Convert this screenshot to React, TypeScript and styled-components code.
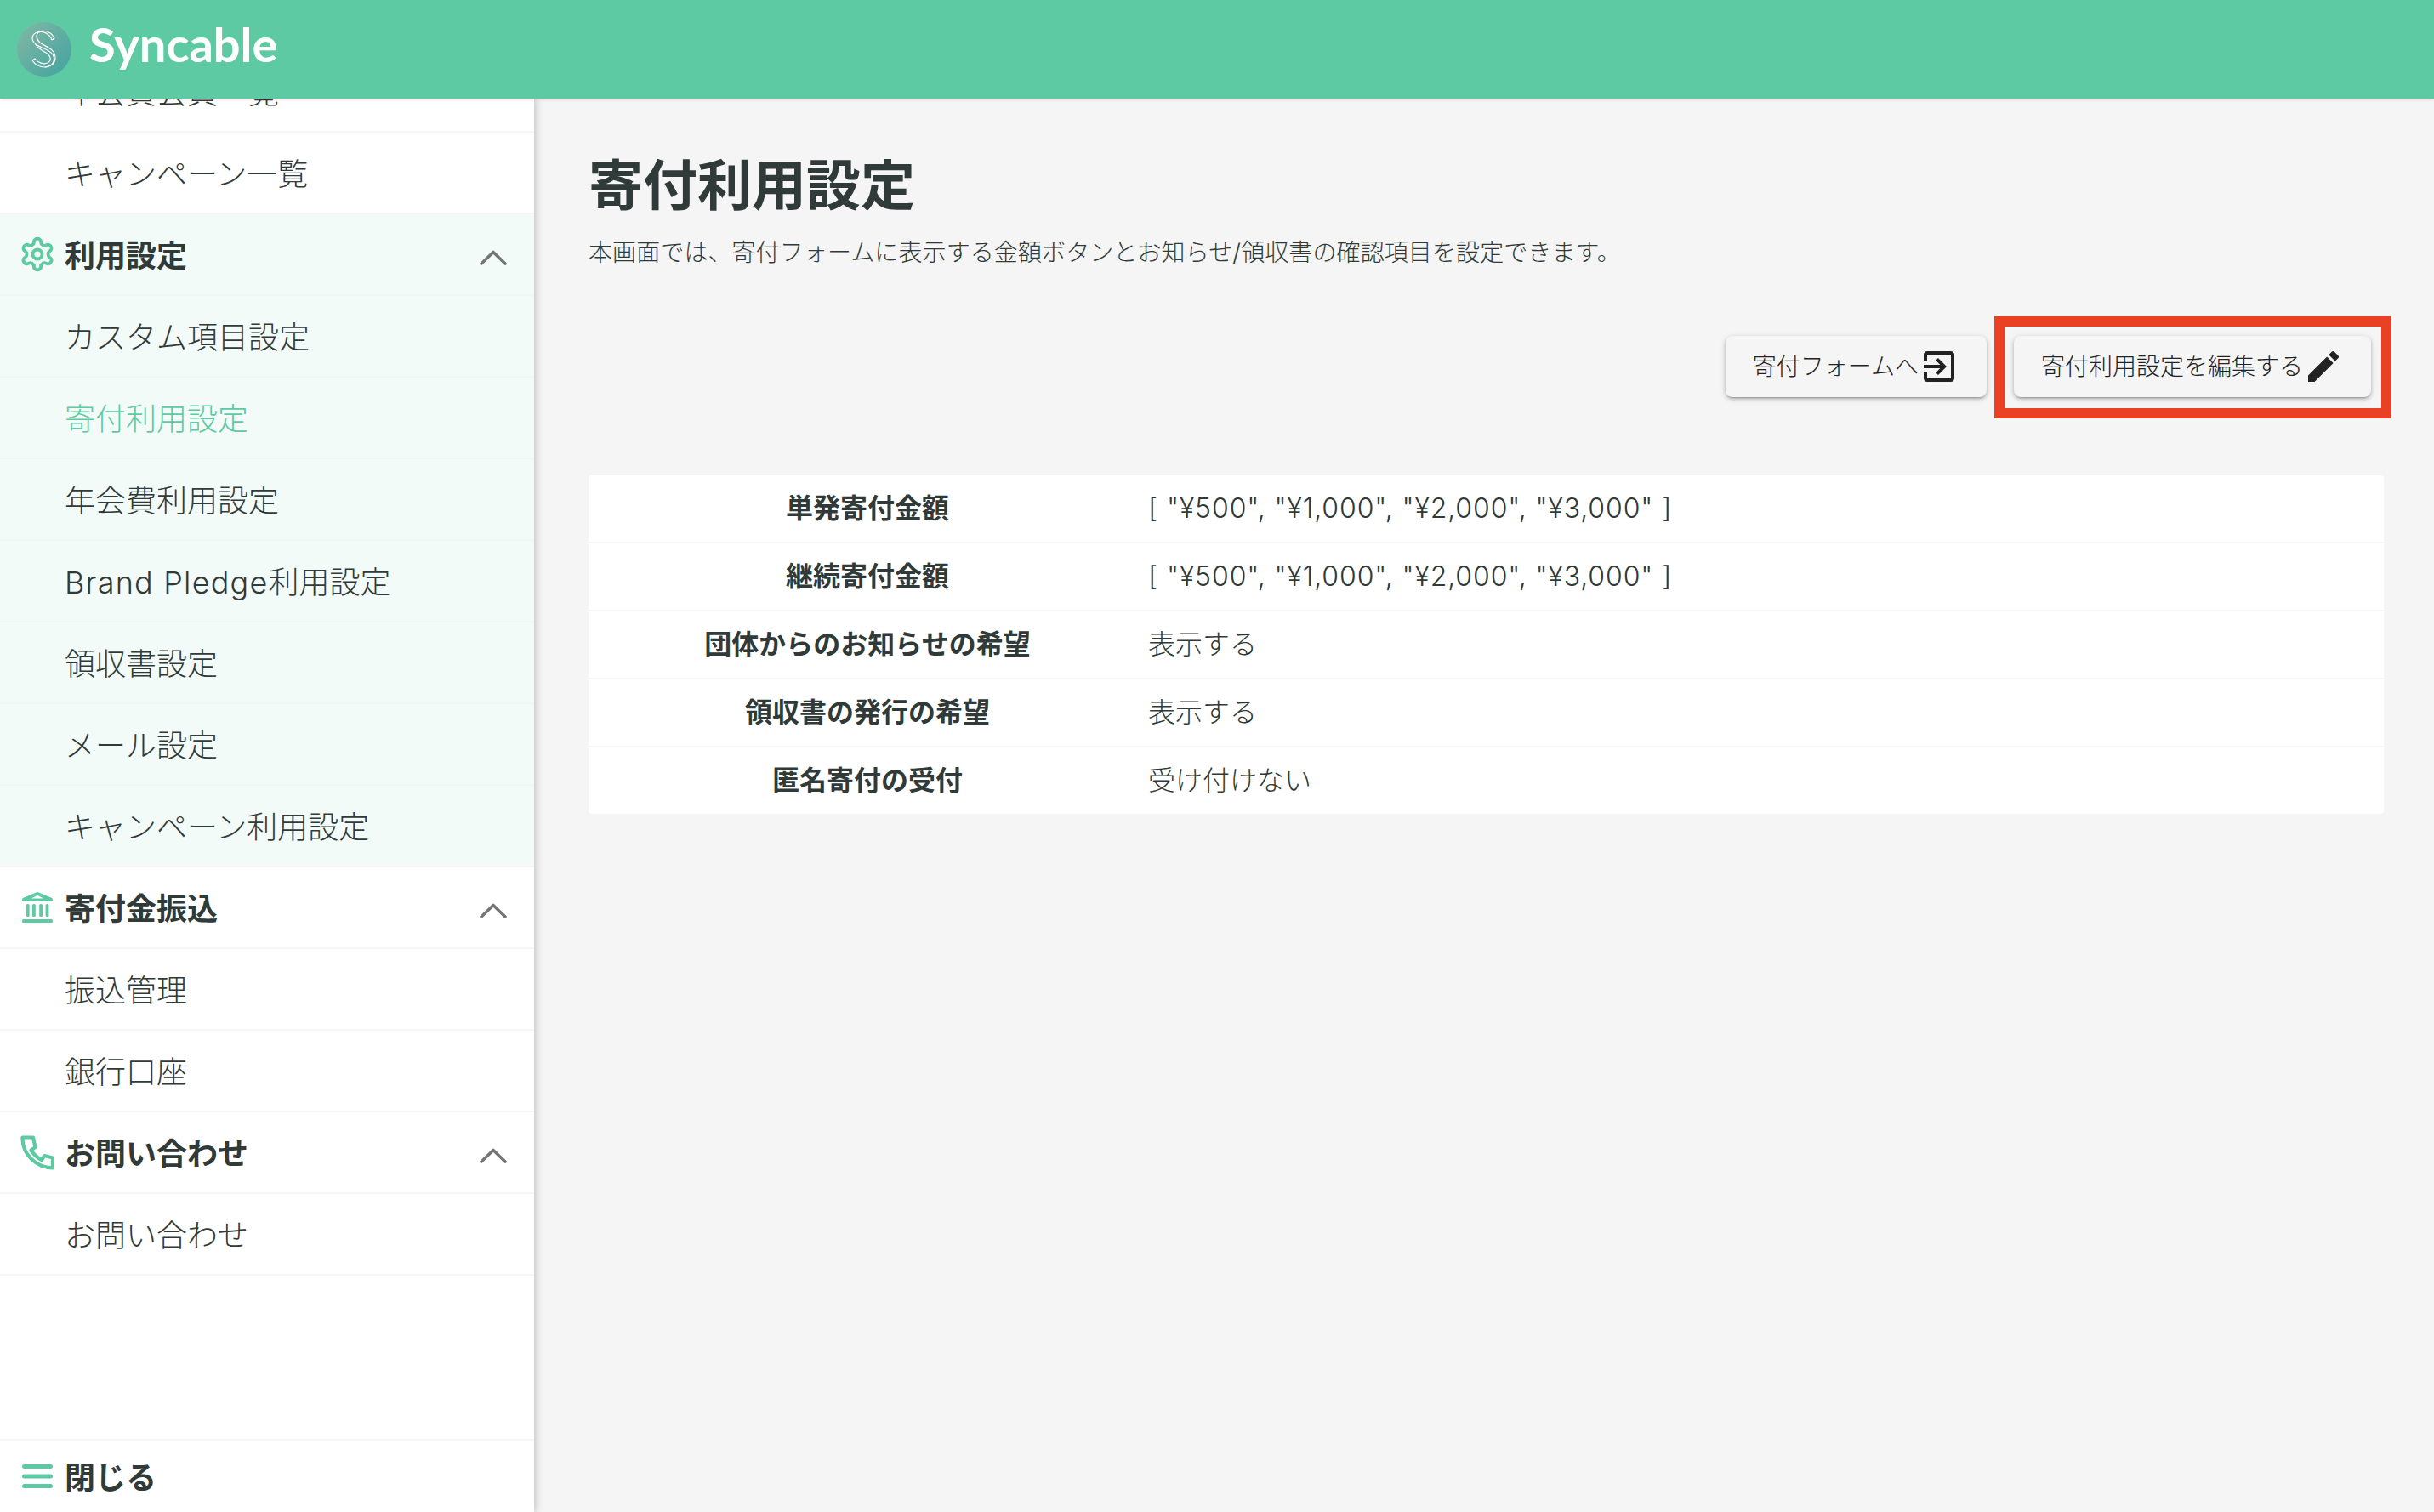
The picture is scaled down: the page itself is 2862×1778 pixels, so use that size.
import React from "react";
import styled, { createGlobalStyle } from "styled-components";

const GREEN = "#5ecaa3";
const INK = "#303a38";

const GlobalStyle = createGlobalStyle`
  html, body {
    margin: 0;
    padding: 0;
    height: 100%;
    overflow: hidden;
    background: #f5f5f5;
  }
  * {
    box-sizing: border-box;
  }
  body {
    font-family: Inter, "Noto Sans CJK JP", sans-serif;
    color: ${INK};
  }
`;

const Page = styled.div`
  width: 2862px;
  height: 1778px;
  display: flex;
  flex-direction: column;
  overflow: hidden;
`;

const Header = styled.header`
  height: 116px;
  flex: none;
  display: flex;
  align-items: center;
  gap: 21px;
  padding-left: 20px;
  background: ${GREEN};
  box-shadow: 0 1px 4px rgba(0, 0, 0, 0.12);
  position: relative;
  z-index: 2;
`;

const Brand = styled.span`
  font-family: Lato, sans-serif;
  font-size: 56px;
  font-weight: 700;
  line-height: 64px;
  color: #fff;
  margin-bottom: 12px;
`;

const Body = styled.div`
  flex: 1;
  min-height: 0;
  display: flex;
`;

const Sidebar = styled.aside`
  width: 628px;
  flex: none;
  display: flex;
  flex-direction: column;
  background: #fff;
  box-shadow: 3px 0 8px rgba(0, 0, 0, 0.18);
  position: relative;
  z-index: 1;
`;

const Nav = styled.nav`
  flex: 1;
  min-height: 0;
  overflow: hidden;
  display: flex;
  flex-direction: column;
`;

/* the list is scrolled a little in the screenshot, the first row is cut by the header */
const NavScroll = styled.div`
  margin-top: -56px;
`;

const Row = styled.div<{ $tint?: boolean; $active?: boolean; $head?: boolean }>`
  height: 96px;
  display: flex;
  align-items: center;
  gap: 14px;
  padding: 4px 32px 0 ${(p) => (p.$head ? "26px" : "76px")};
  border-bottom: 2px solid #f5f5f5;
  background: ${(p) => (p.$tint ? "#f3fbf8" : "#fff")};
  color: ${(p) => (p.$active ? GREEN : INK)};
  font-size: 36px;
  font-weight: ${(p) => (p.$head ? 700 : 300)};
  line-height: 1;
  white-space: nowrap;
`;

const RowIcon = styled.span`
  width: 36px;
  height: 40px;
  margin-top: -4px;
  flex: none;
  display: flex;
  align-items: center;
  justify-content: center;
  color: ${GREEN};

  svg {
    flex: none;
  }
`;

const Chevron = styled.svg`
  width: 32px;
  height: 18px;
  margin-left: auto;
  position: relative;
  top: 2px;
`;

const CloseRow = styled(Row)`
  height: 86px;
  flex: none;
  border-bottom: 0;
  border-top: 2px solid #f5f5f5;
`;

const Latin = styled.span`
  letter-spacing: 1.2px;
`;

const Main = styled.main`
  flex: 1;
  min-width: 0;
  padding: 56px 59px 0 64px;
`;

const Title = styled.h1`
  margin: 0;
  font-size: 64px;
  font-weight: 700;
  line-height: 92px;
`;

const Description = styled.p`
  margin: 13px 0 0;
  font-size: 28px;
  font-weight: 300;
  line-height: 40px;
  letter-spacing: 0.1px;
`;

const Actions = styled.div`
  margin-top: 78px;
  display: flex;
  justify-content: flex-end;
  gap: 32px;
  padding-right: 15px;
`;

const Button = styled.button<{ $marked?: boolean }>`
  height: 72px;
  display: flex;
  align-items: center;
  padding: 0 32px;
  border: 0;
  border-radius: 8px;
  background: #f5f5f5;
  color: #222;
  font-family: inherit;
  font-size: 28px;
  font-weight: 300;
  line-height: 1;
  white-space: nowrap;
  position: relative;
  box-shadow: 0 3px 2px -2px rgba(0, 0, 0, 0.2), 0 2px 4px rgba(0, 0, 0, 0.22), 0 2px 10px rgba(0, 0, 0, 0.1);

  ${(p) =>
    p.$marked &&
    `
    &::after {
      content: "";
      position: absolute;
      inset: -23px -24px -25px -23px;
      border: 12px solid #ea4125;
    }
  `}
`;

const ButtonIcon = styled.svg`
  width: 48px;
  height: 48px;
  flex: none;
  fill: #222;
`;

const Table = styled.div`
  margin-top: 92px;
  width: 2111px;
  background: #fff;
  border-radius: 4px;
`;

const TableRow = styled.div`
  height: 80px;
  display: grid;
  grid-template-columns: 656px 1fr;
  align-items: center;
  font-size: 32px;
  line-height: 1;
  border-bottom: 2px solid #f5f5f5;

  &:last-child {
    height: 78px;
    border-bottom: 0;
  }
`;

const Label = styled.div`
  text-align: center;
  font-weight: 700;
`;

const Value = styled.div<{ $list?: boolean }>`
  padding-left: 2px;
  font-weight: 300;
  letter-spacing: ${(p) => (p.$list ? "0.9px" : "0")};
`;

const ChevronUp = () => (
  <Chevron viewBox="0 0 32 18" fill="none" stroke="#757575" strokeWidth="3.6" strokeLinecap="round" strokeLinejoin="round">
    <path d="M2 16 L16 2.5 L30 16" />
  </Chevron>
);

const GearIcon = () => (
  <svg width="44" height="44" viewBox="0 0 24 24" fill="none" stroke={GREEN} strokeWidth="2.1" strokeLinecap="round" strokeLinejoin="round">
    <path d="M12.22 2h-.44a2 2 0 0 0-2 2v.18a2 2 0 0 1-1 1.73l-.43.25a2 2 0 0 1-2 0l-.15-.08a2 2 0 0 0-2.73.73l-.22.38a2 2 0 0 0 .73 2.73l.15.1a2 2 0 0 1 1 1.72v.51a2 2 0 0 1-1 1.74l-.15.09a2 2 0 0 0-.73 2.73l.22.38a2 2 0 0 0 2.73.73l.15-.08a2 2 0 0 1 2 0l.43.25a2 2 0 0 1 1 1.73V20a2 2 0 0 0 2 2h.44a2 2 0 0 0 2-2v-.18a2 2 0 0 1 1-1.73l.43-.25a2 2 0 0 1 2 0l.15.08a2 2 0 0 0 2.73-.73l.22-.39a2 2 0 0 0-.73-2.73l-.15-.08a2 2 0 0 1-1-1.74v-.5a2 2 0 0 1 1-1.74l.15-.09a2 2 0 0 0 .73-2.73l-.22-.38a2 2 0 0 0-2.73-.73l-.15.08a2 2 0 0 1-2 0l-.43-.25a2 2 0 0 1-1-1.73V4a2 2 0 0 0-2-2z" />
    <circle cx="12" cy="12" r="3" />
  </svg>
);

const BankIcon = () => (
  <svg width="36" height="36" viewBox="0 0 36 36" fill={GREEN}>
    <path d="M17 .3 a2.5 2.5 0 0 1 2 0 L34.5 6.8 a2.4 2.4 0 0 1 1.5 2.2 v.5 a1.5 1.5 0 0 1-1.5 1.5 H1.5 a1.5 1.5 0 0 1-1.5-1.5 v-.5 a2.4 2.4 0 0 1 1.5-2.2 Z M18 3.8 L11 7.4 H25 Z" fillRule="evenodd" />
    <rect x="4.8" y="14" width="3.8" height="15" rx="1.6" />
    <rect x="12" y="14" width="3.8" height="15" rx="1.6" />
    <rect x="20.2" y="14" width="3.8" height="15" rx="1.6" />
    <rect x="27.6" y="14" width="3.8" height="15" rx="1.6" />
    <rect x="0" y="32" width="36" height="4" rx="1.6" />
  </svg>
);

const PhoneIcon = () => (
  <svg width="40" height="41" viewBox="0 0 40 41" fill="none" stroke={GREEN} strokeWidth="4.2" strokeLinejoin="round" strokeLinecap="round">
    <path d="M2.5 2.5 H15 L17.5 14 L12.5 17.5 C16 23 20 26.5 25 29 L28.5 24 L38 26.5 V38.5 C18 38 2.5 22 2.5 4 Z" />
  </svg>
);

const MenuIcon = () => (
  <svg width="36" height="30" viewBox="0 0 36 30" fill={GREEN}>
    <rect x="0" y="1" width="36" height="5" rx="2.5" />
    <rect x="0" y="12.5" width="36" height="5" rx="2.5" />
    <rect x="0" y="24" width="36" height="5" rx="2.5" />
  </svg>
);

const Logo = () => (
  <svg width="64" height="64" viewBox="0 0 64 64">
    <defs>
      <linearGradient id="logoFill" x1="0" y1="0" x2="1" y2="1">
        <stop offset="0" stopColor="#83b8a3" />
        <stop offset="1" stopColor="#41a3a1" />
      </linearGradient>
    </defs>
    <circle cx="32" cy="32" r="32" fill="url(#logoFill)" />
    <g fill="none" stroke="#fff" strokeWidth="1.2">
      <path d="M41 21 C38 13 30 10 24 12 C17 14 16 21 22 26 C27 30 38 32 42 38 C46 45 42 52 33 53 C26 53 21 50 18 45" />
      <path d="M41 21 L44 19 C40 11 32 9 26 11" />
      <path d="M26 11 C22 14 22 20 27 24 C33 29 45 31 45 42 C45 49 40 52 33 53" />
      <path d="M18 45 L21 43 C25 48 31 50 36 48 C41 45 40 40 34 36 C28 32 23 30 22 26" />
    </g>
  </svg>
);

const subRow = (text: string, tint?: boolean, active?: boolean) => (
  <Row key={text} $tint={tint} $active={active}>
    {text}
  </Row>
);

const rows = [
  ["単発寄付金額", '[ "¥500", "¥1,000", "¥2,000", "¥3,000" ]'],
  ["継続寄付金額", '[ "¥500", "¥1,000", "¥2,000", "¥3,000" ]'],
  ["団体からのお知らせの希望", "表示する"],
  ["領収書の発行の希望", "表示する"],
  ["匿名寄付の受付", "受け付けない"],
];

export default function App() {
  return (
    <Page>
      <GlobalStyle />
      <Header>
        <Logo />
        <Brand>Syncable</Brand>
      </Header>
      <Body>
        <Sidebar>
          <Nav>
            <NavScroll>
              {subRow("年会費会員一覧")}
              {subRow("キャンペーン一覧")}
              <Row $head $tint>
                <RowIcon><GearIcon /></RowIcon>
                利用設定
                <ChevronUp />
              </Row>
              {subRow("カスタム項目設定", true)}
              {subRow("寄付利用設定", true, true)}
              {subRow("年会費利用設定", true)}
              <Row $tint>
                <span>
                  <Latin>Brand Pledge</Latin>利用設定
                </span>
              </Row>
              {subRow("領収書設定", true)}
              {subRow("メール設定", true)}
              {subRow("キャンペーン利用設定", true)}
              <Row $head>
                <RowIcon><BankIcon /></RowIcon>
                寄付金振込
                <ChevronUp />
              </Row>
              {subRow("振込管理")}
              {subRow("銀行口座")}
              <Row $head>
                <RowIcon><PhoneIcon /></RowIcon>
                お問い合わせ
                <ChevronUp />
              </Row>
              {subRow("お問い合わせ")}
            </NavScroll>
          </Nav>
          <CloseRow $head>
            <RowIcon><MenuIcon /></RowIcon>
            閉じる
          </CloseRow>
        </Sidebar>
        <Main>
          <Title>寄付利用設定</Title>
          <Description>
            本画面では、寄付フォームに表示する金額ボタンとお知らせ/領収書の確認項目を設定できます。
          </Description>
          <Actions>
            <Button>
              寄付フォームへ
              <ButtonIcon viewBox="0 0 24 24">
                <path d="M10.09 15.59L11.5 17l5-5-5-5-1.41 1.41L12.67 11H3v2h9.67l-2.58 2.59zM19 3H5c-1.11 0-2 .9-2 2v4h2V5h14v14H5v-4H3v4c0 1.1.89 2 2 2h14c1.1 0 2-.9 2-2V5c0-1.1-.9-2-2-2z" />
              </ButtonIcon>
            </Button>
            <Button $marked>
              寄付利用設定を編集する
              <ButtonIcon viewBox="0 0 24 24">
                <path d="M3 17.25V21h3.75L17.81 9.94l-3.75-3.75L3 17.25zM20.71 7.04c.39-.39.39-1.02 0-1.41l-2.34-2.34c-.39-.39-1.02-.39-1.41 0l-1.83 1.83 3.75 3.75 1.83-1.83z" />
              </ButtonIcon>
            </Button>
          </Actions>
          <Table>
            {rows.map(([label, value]) => (
              <TableRow key={label}>
                <Label>{label}</Label>
                <Value $list={value.startsWith("[")}>{value}</Value>
              </TableRow>
            ))}
          </Table>
        </Main>
      </Body>
    </Page>
  );
}
